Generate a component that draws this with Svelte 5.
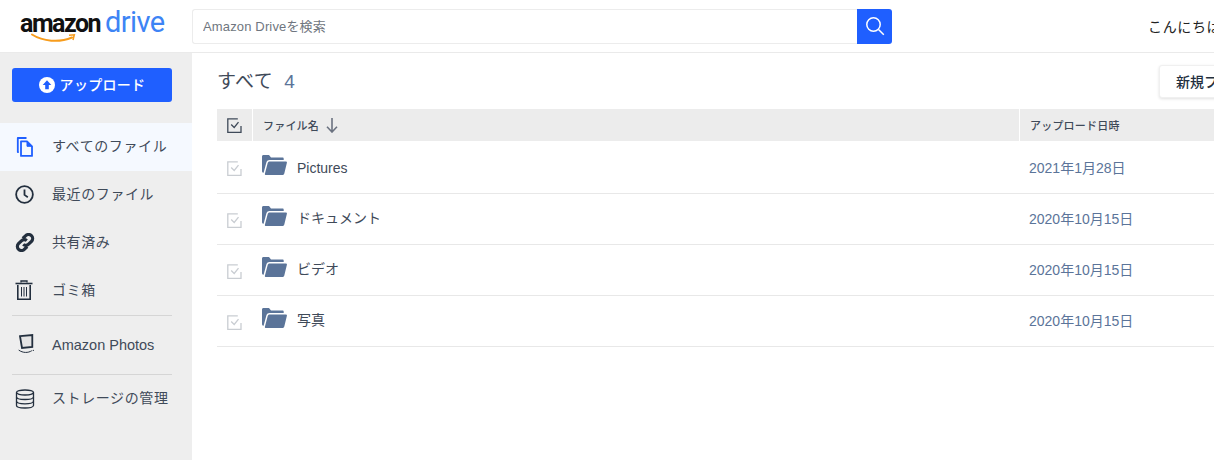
<script lang="ts">
  const nav = [
    { id: 'files', label: 'すべてのファイル', active: true },
    { id: 'recent', label: '最近のファイル' },
    { id: 'shared', label: '共有済み' },
    { id: 'trash', label: 'ゴミ箱' }
  ];

  const rows = [
    { name: 'Pictures', date: '2021年1月28日' },
    { name: 'ドキュメント', date: '2020年10月15日' },
    { name: 'ビデオ', date: '2020年10月15日' },
    { name: '写真', date: '2020年10月15日' }
  ];
</script>

{#snippet check()}
  <svg width="15" height="15" viewBox="0 0 15 15" fill="none" stroke="currentColor" stroke-width="1.300">
    <path d="M14 8v6.300H.8V.8h10" />
    <path d="M4.200 6.500l3 3 4.300-5.300" />
  </svg>
{/snippet}

<div class="page">
  <header class="topbar">
    <div class="logo">
      <span class="logo-amazon">amazon</span><span class="logo-drive">drive</span>
      <svg class="smile" width="46" height="11" viewBox="0 0 46 11" fill="none">
        <path d="M1 1.500C12 8.500 28 10 41 4.500" stroke="#f79c1c" stroke-width="2" stroke-linecap="round" />
        <path d="M38 2.300L43.300 1.800L42 7" stroke="#f79c1c" stroke-width="1.500" />
      </svg>
    </div>
    <div class="search">
      <input class="search-input" placeholder="Amazon Driveを検索" />
      <button type="button" class="search-btn" aria-label="検索">
        <svg width="20" height="20" viewBox="0 0 20 20" fill="none" stroke="#fff" stroke-width="1.500">
          <circle cx="8.500" cy="8.500" r="6.700" />
          <path d="M13.500 13.500L18.800 18.800" />
        </svg>
      </button>
    </div>
    <div class="greeting">こんにちは、ユーザーさん</div>
  </header>

  <div class="body">
    <aside class="sidebar">
      <button type="button" class="upload">
        <svg width="16" height="16" viewBox="0 0 16 16">
          <circle cx="8" cy="8" r="8" fill="#fff" />
          <path d="M8 3.300L12.300 8H9.800v4.300H6.200V8H3.700z" fill="#1f5fff" />
        </svg>
        <span class="upload-label">アップロード</span>
      </button>

      <ul class="nav">
        {#each nav as item}
          <li class="nav-item" class:active={item.active}>
            <span class="nav-icon">
              {#if item.id === 'files'}
                <svg width="18" height="20" viewBox="0 0 18 20" fill="none" stroke="#1f5fff" stroke-width="1.800" stroke-linejoin="round">
                  <path d="M3.800 15H2.800V1h8.700" />
                  <path d="M6 4.300h6l5 5v9.600H6z" />
                  <path d="M12 4.300v5h5z" fill="#1f5fff" stroke-width="1" />
                </svg>
              {:else if item.id === 'recent'}
                <svg class="clock" width="19" height="19" viewBox="0 0 20 20" fill="none" stroke="#232f3e" stroke-width="1.900">
                  <circle cx="10" cy="10" r="8.800" />
                  <path d="M10 4.800v5.600l3.500 2.400" />
                </svg>
              {:else if item.id === 'shared'}
                <svg class="link" width="20" height="19" viewBox="0 0 20 19" fill="none" stroke="#232f3e" stroke-width="3.200">
                  <path d="M7.800 5.500l2.900-2.800a4 4 0 0 1 5.800 5.600l-2.900 2.900a4 4 0 0 1-5.400.2" />
                  <path d="M12.200 13.500l-2.900 2.800a4 4 0 0 1-5.800-5.600l2.900-2.900a4 4 0 0 1 5.400-.2" />
                </svg>
              {:else}
                <svg class="trash" width="18" height="20" viewBox="0 0 18 20" fill="none" stroke="#232f3e">
                  <path d="M0.500 3.500h17" stroke-width="1.600" />
                  <path d="M6 2.500V1h6v1.500" stroke-width="1.300" />
                  <path d="M2.800 5v14.200h12.400V5" stroke-width="1.600" />
                  <path d="M6.500 7v9.500M9 7v9.500M11.500 7v9.500" stroke-width="1" />
                </svg>
              {/if}
            </span>
            <span class="nav-label">{item.label}</span>
          </li>
        {/each}
      </ul>

      <div class="rule"></div>
      <div class="nav-item photos">
        <span class="nav-icon">
          <svg class="photo-icon" width="18" height="20" viewBox="0 0 18 20" fill="none" stroke="#232f3e" stroke-linecap="round">
            <path d="M3 2.200L15.300 1v12L5 14z" stroke-width="1.800" fill="#e4e4e4" />
            <path d="M2 16.300c4 2.800 9 2.800 12.500.6" stroke-width="1" />
            <path d="M16.300 16.300v.1" stroke-width="1.200" />
          </svg>
        </span>
        Amazon Photos
      </div>
      <div class="rule"></div>
      <div class="nav-item storage">
        <span class="nav-icon">
          <svg width="20" height="20" viewBox="0 0 20 20" fill="none" stroke="#232f3e" stroke-width="1.300">
            <ellipse cx="10" cy="3.500" rx="8.500" ry="2.500" />
            <path d="M1.500 3.500v13c0 1.400 3.800 2.500 8.500 2.500s8.500-1.100 8.500-2.500v-13" />
            <path d="M1.500 8c0 1.400 3.800 2.500 8.500 2.500s8.500-1.100 8.500-2.500" />
            <path d="M1.500 12.300c0 1.400 3.800 2.500 8.500 2.500s8.500-1.100 8.500-2.500" />
          </svg>
        </span>
        <span class="nav-label">ストレージの管理</span>
      </div>
    </aside>

    <main class="main">
      <div class="title-row">
        <h1 class="title">すべて<span class="count">4</span></h1>
        <button type="button" class="new-folder">新規フォルダ</button>
      </div>

      <div class="thead">
        <div class="th th-check">{@render check()}</div>
        <div class="th th-name">
          ファイル名
          <svg width="12" height="16" viewBox="0 0 12 16" fill="none" stroke="#6b7280" stroke-width="1.600">
            <path d="M6 1v14M1 9.800L6 15l5-5.200" />
          </svg>
        </div>
        <div class="th th-date">アップロード日時</div>
      </div>

      {#each rows as row, i}
        <div class="row" class:first={i === 0}>
          <div class="cell-check">{@render check()}</div>
          <div class="cell-name">
            <svg width="25" height="20" viewBox="0 0 25 20">
              <path d="M1.500 0H7l2 2.500h11.500c.8 0 1.200.5 1.200 1.200V5H7.500C6 5 5 5.800 4.500 7L1.600 17.800C.7 17.800 0 17 0 16V1.500C0 .6.600 0 1.500 0z" fill="#5b7499" />
              <path d="M7.500 6.500H24c.7 0 1.100.6.900 1.300l-2.600 10.700c-.2.900-.9 1.500-1.800 1.500H3.800c-.7 0-1.100-.6-.9-1.300L5.700 8c.2-.9 1-1.500 1.800-1.500z" fill="#5b7499" />
            </svg>
            <span class="name">{row.name}</span>
          </div>
          <div class="cell-date">{row.date}</div>
        </div>
      {/each}
    </main>
  </div>
</div>

<style>
  :global(body) {
    overflow: hidden;
    background: #fff;
  }

  .page {
    width: 1500px;
    height: 460px;
    overflow: hidden;
    font-family: "Liberation Sans", "Noto Sans CJK JP", sans-serif;
    color: #232f3e;
  }

  /* Top bar */
  .topbar {
    display: flex;
    align-items: center;
    height: 52px;
    border-bottom: 1px solid #eaeaea;
    box-sizing: content-box;
  }

  .logo {
    position: relative;
    width: 192px;
    flex-shrink: 0;
    padding-left: 20px;
    box-sizing: border-box;
    height: 52px;
    line-height: 45px;
    white-space: nowrap;
  }

  .logo-amazon {
    font-family: Roboto, sans-serif;
    font-size: 25px;
    font-weight: 700;
    letter-spacing: -1.5px;
    color: #111;
  }

  .logo-drive {
    font-family: Roboto, sans-serif;
    font-size: 29px;
    font-weight: 400;
    letter-spacing: -0.6px;
    color: #3d84f5;
    margin-left: 5px;
  }

  .smile {
    position: absolute;
    left: 31px;
    top: 33px;
  }

  .search {
    display: flex;
    width: 700px;
    height: 35px;
  }

  .search-input {
    flex: 1;
    min-width: 0;
    height: 35px;
    box-sizing: border-box;
    border: 1px solid #ececec;
    border-right: none;
    border-radius: 3px 0 0 3px;
    padding: 0 10px;
    font: 13px "Liberation Sans", "Noto Sans CJK JP", sans-serif;
    letter-spacing: 0.15px;
    color: #555;
    outline: none;
  }

  .search-input::placeholder {
    color: #6f7680;
    opacity: 1;
  }

  .search-btn {
    display: flex;
    align-items: center;
    justify-content: center;
    width: 35px;
    height: 35px;
    padding: 0;
    border: none;
    border-radius: 0 3px 3px 0;
    background: #1f5fff;
  }

  .greeting {
    margin-left: 257px;
    font-size: 14px;
    letter-spacing: 0.65px;
    color: #222;
    white-space: nowrap;
    transform: translateX(-1px);
  }

  .body {
    display: flex;
    height: 407px;
  }

  /* Sidebar */
  .sidebar {
    width: 192px;
    flex-shrink: 0;
    background: #eee;
    padding-top: 15px;
    box-sizing: border-box;
  }

  .upload {
    display: flex;
    align-items: center;
    justify-content: center;
    gap: 5px;
    width: 160px;
    height: 34px;
    margin: 0 0 21px 12px;
    padding: 0;
    border: none;
    border-radius: 3px;
    background: #1f5fff;
    color: #fff;
    font: 500 14px "Liberation Sans", "Noto Sans CJK JP", sans-serif;
    letter-spacing: 0.3px;
  }

  .upload-label {
    margin-bottom: 2px;
  }

  .nav {
    list-style: none;
    margin: 0;
    padding: 0;
  }

  .nav-item {
    display: flex;
    align-items: center;
    height: 48px;
    padding-left: 15px;
    font-size: 14px;
    color: #3f4a59;
    white-space: nowrap;
  }

  .nav-item.active {
    background: #f5f9ff;
  }

  .nav-icon {
    display: flex;
    align-items: center;
    width: 37px;
    flex-shrink: 0;
  }

  .nav-label {
    letter-spacing: 0.6px;
    margin-bottom: 4px;
  }

  .clock {
    margin-bottom: 1px;
  }

  .link {
    margin-bottom: 1px;
  }

  .trash {
    margin-bottom: 2px;
  }

  .photo-icon {
    margin: 0 0 3px 2px;
  }

  .rule {
    height: 1px;
    margin: 0 20px 0 12px;
    background: #d5d5d5;
  }

  .photos {
    height: 58px;
    font-size: 14.500px;
  }

  .storage {
    height: 48px;
  }

  /* Main */
  .main {
    flex: 1;
    padding-left: 25px;
    min-width: 0;
  }

  .title-row {
    display: flex;
    align-items: center;
    justify-content: space-between;
    width: 1142px;
    height: 56px;
  }

  .title {
    margin: 0 0 4px;
    font-size: 19px;
    font-weight: 400;
    letter-spacing: 0.4px;
    color: #3f4a59;
  }

  .count {
    margin-left: 11px;
    color: #5b7499;
  }

  .new-folder {
    width: 200px;
    height: 33px;
    padding: 0 0 0 16px;
    text-align: left;
    background: #fff;
    border: 1px solid #f0f0f0;
    border-radius: 3px;
    box-shadow: 0 1px 3px rgba(0, 0, 0, 0.12);
    font: 500 14px "Liberation Sans", "Noto Sans CJK JP", sans-serif;
    color: #232f3e;
  }

  .thead {
    display: flex;
    height: 32px;
    background: #ececec;
  }

  .th {
    display: flex;
    align-items: center;
    font-size: 11px;
    font-weight: 500;
    color: #3f4a59;
    letter-spacing: 0.2px;
    box-sizing: border-box;
  }

  .th-check {
    width: 36px;
    justify-content: center;
    color: #3f4a59;
    border-right: 1px solid #fff;
  }

  .th-name {
    width: 767px;
    padding-left: 10px;
    gap: 7px;
    border-right: 1px solid #fff;
  }

  .th-date {
    padding-left: 10px;
  }

  .row {
    display: flex;
    align-items: center;
    height: 51px;
    border-bottom: 1px solid #e8e8e8;
    box-sizing: border-box;
  }

  .row.first {
    height: 53px;
  }

  .cell-check {
    display: flex;
    justify-content: center;
    width: 35px;
    margin: 2px 1px 0 0;
    color: #c9cdd2;
  }

  .cell-name {
    display: flex;
    align-items: center;
    gap: 10px;
    width: 767px;
    padding-left: 9px;
    box-sizing: border-box;
    font-size: 14px;
    color: #3f4a59;
  }

  .cell-name svg {
    margin-top: -7px;
  }

  .row.first .cell-name svg {
    margin-top: -5px;
  }

  .name {
    margin-bottom: 4px;
  }

  .row.first .name {
    margin-bottom: 0;
    margin-top: 2px;
  }

  .cell-date {
    padding-left: 9px;
    margin-bottom: 2px;
    font-size: 14px;
    color: #5b7499;
  }

  .row.first .cell-date {
    margin-bottom: 0;
  }
</style>
